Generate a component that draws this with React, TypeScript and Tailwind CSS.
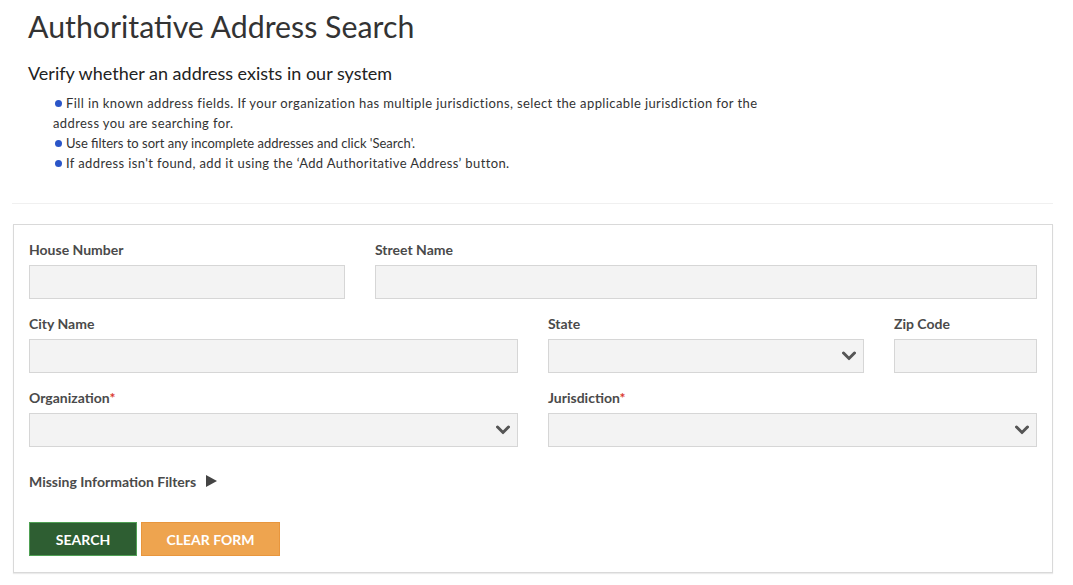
const Chevron = () => (
  <svg width="14" height="9" viewBox="0 0 14 9" className="absolute right-[7px] top-1/2 -translate-y-1/2">
    <polyline points="1.5,1.5 7,7 12.5,1.5" fill="none" stroke="#555" strokeWidth="3" strokeLinecap="square" />
  </svg>
);

const Field = ({
  label,
  span,
  required,
  select,
}: {
  label: string;
  span: string;
  required?: boolean;
  select?: boolean;
}) => (
  <div className={span}>
    <div className="h-5 leading-5 text-[14px] font-bold text-[#4a4a4a] mb-[5px]">
      {label}
      {required && <span className="text-[#d9372f]">*</span>}
    </div>
    <div className="relative h-[34px] bg-[#f3f3f3] border border-[#d6d6d6]">{select && <Chevron />}</div>
  </div>
);

const Dot = () => <span className="inline-block w-[7px] h-[7px] rounded-full bg-[#2a55c8] mr-[4px] ml-[2px] -translate-y-[1px]" />;

export default function App() {
  return (
    <div className="w-[1073px] h-[585px] bg-white px-3 font-['Lato',sans-serif] text-[#333]">
      <div className="w-[1041px]">
        <h1 className="pl-4 pt-[10px] text-[30.3px] leading-[33px] text-[#333]">Authoritative Address Search</h1>
        <h2 className="pl-4 mt-[18px] text-[18px] leading-6 text-[#222]">Verify whether an address exists in our system</h2>
        <ul className="pl-[41px] mt-[8px] w-[760px] text-[13px] leading-5 text-[#333]">
          <li className="tracking-[0.4px]">
            <Dot />
            Fill in known address fields. If your organization has multiple jurisdictions, select the applicable jurisdiction for the address you are searching for.
          </li>
          <li>
            <Dot />
            Use filters to sort any incomplete addresses and click 'Search'.
          </li>
          <li className="tracking-[0.38px]">
            <Dot />
            If address isn't found, add it using the ‘Add Authoritative Address’ button.
          </li>
        </ul>
        <div className="mt-[30px] border-t border-[#f0f0f0]" />
        <div className="mt-5 ml-px border border-[#d9d9d9] shadow-[0_1px_1px_rgba(0,0,0,0.08)] px-[15px] pt-[15px] pb-[16px]">
          <div className="grid grid-cols-12 gap-x-[30px] gap-y-[15px]">
            <Field label="House Number" span="col-span-4" />
            <Field label="Street Name" span="col-span-8" />
            <Field label="City Name" span="col-span-6" />
            <Field label="State" span="col-span-4" select />
            <Field label="Zip Code" span="col-span-2" />
            <Field label="Organization" span="col-span-6" required select />
            <Field label="Jurisdiction" span="col-span-6" required select />
          </div>
          <div className="mt-6 h-5 flex items-center text-[14px] font-bold text-[#4a4a4a]">
            Missing Information Filters
            <svg width="11" height="12" viewBox="0 0 11 12" className="ml-[10px]">
              <polygon points="0,0 11,6 0,12" fill="#444" />
            </svg>
          </div>
          <div className="mt-[31px] flex gap-1">
            <button className="w-[108px] h-[34px] bg-[#2e5e32] border border-[#4fa054] text-white text-[14px] font-bold uppercase">
              Search
            </button>
            <button className="w-[139px] h-[34px] bg-[#eea44f] border border-[#e8963d] text-white text-[14px] font-bold uppercase">
              Clear Form
            </button>
          </div>
        </div>
      </div>
    </div>
  );
}
